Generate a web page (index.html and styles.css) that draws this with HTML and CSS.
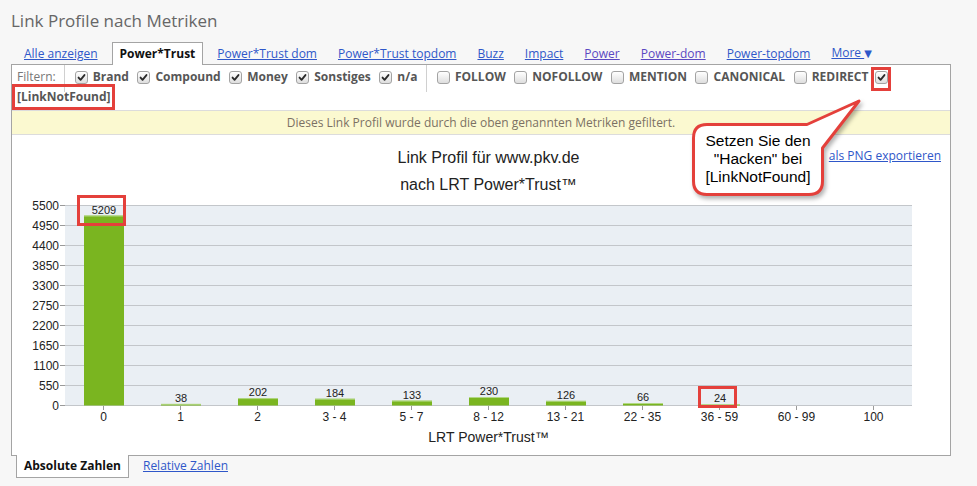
FILE: index.html
```html
<!DOCTYPE html>
<html lang="de">
<head>
<meta charset="utf-8">
<title>Link Profile nach Metriken</title>
<link rel="stylesheet" href="styles.css">
</head>
<body>
<div class="page">
  <h1 class="title">Link Profile nach Metriken</h1>
  <nav class="tabs">
    <a class="tab" href="#">Alle anzeigen</a>
    <span class="tab active">Power*Trust</span>
    <a class="tab" href="#">Power*Trust dom</a>
    <a class="tab" href="#">Power*Trust topdom</a>
    <a class="tab" href="#">Buzz</a>
    <a class="tab" href="#">Impact</a>
    <a class="tab visited" href="#">Power</a>
    <a class="tab visited" href="#">Power-dom</a>
    <a class="tab" href="#">Power-topdom</a>
    <a class="tab" href="#">More <span class="caret">&#9660;</span></a>
  </nav>
  <div class="panel">
    <div class="filters">
      <span class="flabel">Filtern:</span>
      <span class="sep"></span>
      <span class="cb checked"><svg viewBox="0 0 13 13"><path d="M3 6.6 L5.4 9.2 L10 3.6"/></svg></span><span class="opt">Brand</span>
      <span class="cb checked"><svg viewBox="0 0 13 13"><path d="M3 6.6 L5.4 9.2 L10 3.6"/></svg></span><span class="opt">Compound</span>
      <span class="cb checked"><svg viewBox="0 0 13 13"><path d="M3 6.6 L5.4 9.2 L10 3.6"/></svg></span><span class="opt">Money</span>
      <span class="cb checked"><svg viewBox="0 0 13 13"><path d="M3 6.6 L5.4 9.2 L10 3.6"/></svg></span><span class="opt">Sonstiges</span>
      <span class="cb checked"><svg viewBox="0 0 13 13"><path d="M3 6.6 L5.4 9.2 L10 3.6"/></svg></span><span class="opt">n/a</span>
      <span class="sep"></span>
      <span class="cb"></span><span class="opt">FOLLOW</span>
      <span class="cb"></span><span class="opt">NOFOLLOW</span>
      <span class="cb"></span><span class="opt">MENTION</span>
      <span class="cb"></span><span class="opt">CANONICAL</span>
      <span class="cb"></span><span class="opt last">REDIRECT</span>
      <span class="hl hl-cb"><span class="cb checked"><svg viewBox="0 0 13 13"><path d="M3 6.6 L5.4 9.2 L10 3.6"/></svg></span></span>
      <span class="break"></span>
      <span class="hl hl-text"><span class="opt">[LinkNotFound]</span></span>
    </div>
    <div class="notice">Dieses Link Profil wurde durch die oben genannten Metriken gefiltert.</div>
    <div class="chart">
      <a class="export" href="#">als PNG exportieren</a>
      <svg class="plot" width="938" height="320" viewBox="12 136 938 320">
        <text class="ctitle" x="488.5" y="164" text-anchor="middle">Link Profil für www.pkv.de</text>
        <text class="ctitle" x="488.5" y="191" text-anchor="middle">nach LRT Power*Trust™</text>
        <rect x="65" y="206" width="847" height="200" fill="#eaeff4"/>
        <g class="grid">
          <line x1="65" x2="912" y1="206.5" y2="206.5"/>
          <line x1="65" x2="912" y1="226.5" y2="226.5"/>
          <line x1="65" x2="912" y1="246.5" y2="246.5"/>
          <line x1="65" x2="912" y1="266.5" y2="266.5"/>
          <line x1="65" x2="912" y1="286.5" y2="286.5"/>
          <line x1="65" x2="912" y1="306.5" y2="306.5"/>
          <line x1="65" x2="912" y1="326.5" y2="326.5"/>
          <line x1="65" x2="912" y1="346.5" y2="346.5"/>
          <line x1="65" x2="912" y1="366.5" y2="366.5"/>
          <line x1="65" x2="912" y1="386.5" y2="386.5"/>
          <line x1="65" x2="912" y1="406.5" y2="406.5"/>
        </g>
        <g class="ticks">
          <line x1="60" x2="65" y1="206.5" y2="206.5"/>
          <line x1="60" x2="65" y1="226.5" y2="226.5"/>
          <line x1="60" x2="65" y1="246.5" y2="246.5"/>
          <line x1="60" x2="65" y1="266.5" y2="266.5"/>
          <line x1="60" x2="65" y1="286.5" y2="286.5"/>
          <line x1="60" x2="65" y1="306.5" y2="306.5"/>
          <line x1="60" x2="65" y1="326.5" y2="326.5"/>
          <line x1="60" x2="65" y1="346.5" y2="346.5"/>
          <line x1="60" x2="65" y1="366.5" y2="366.5"/>
          <line x1="60" x2="65" y1="386.5" y2="386.5"/>
          <line x1="60" x2="65" y1="406.5" y2="406.5"/>
          <line x1="103.5" x2="103.5" y1="407" y2="411"/>
          <line x1="180.5" x2="180.5" y1="407" y2="411"/>
          <line x1="257.5" x2="257.5" y1="407" y2="411"/>
          <line x1="334.5" x2="334.5" y1="407" y2="411"/>
          <line x1="411.5" x2="411.5" y1="407" y2="411"/>
          <line x1="488.5" x2="488.5" y1="407" y2="411"/>
          <line x1="565.5" x2="565.5" y1="407" y2="411"/>
          <line x1="642.5" x2="642.5" y1="407" y2="411"/>
          <line x1="719.5" x2="719.5" y1="407" y2="411"/>
          <line x1="796.5" x2="796.5" y1="407" y2="411"/>
          <line x1="873.5" x2="873.5" y1="407" y2="411"/>
        </g>
        <g class="ylab" text-anchor="end">
          <text x="59" y="210.5">5500</text>
          <text x="59" y="230.5">4950</text>
          <text x="59" y="250.5">4400</text>
          <text x="59" y="270.5">3850</text>
          <text x="59" y="290.5">3300</text>
          <text x="59" y="310.5">2750</text>
          <text x="59" y="330.5">2200</text>
          <text x="59" y="350.5">1650</text>
          <text x="59" y="370.5">1100</text>
          <text x="59" y="390.5">550</text>
          <text x="59" y="410.5">0</text>
        </g>
        <g class="bars">
          <rect x="84" y="216.6" width="40" height="189.9"/>
          <rect x="161" y="405.1" width="40" height="1.4"/>
          <rect x="238" y="399.2" width="40" height="7.3"/>
          <rect x="315" y="399.8" width="40" height="6.7"/>
          <rect x="392" y="401.7" width="40" height="4.8"/>
          <rect x="469" y="398.1" width="40" height="8.4"/>
          <rect x="546" y="401.9" width="40" height="4.6"/>
          <rect x="623" y="404.1" width="40" height="2.4"/>
          <rect x="700" y="405.6" width="40" height="0.9"/>
        </g>
        <g class="bartop">
          <line x1="84" x2="124" y1="217" y2="217"/>
          <line x1="161" x2="201" y1="405.3" y2="405.3"/>
          <line x1="238" x2="278" y1="399.6" y2="399.6"/>
          <line x1="315" x2="355" y1="400.2" y2="400.2"/>
          <line x1="392" x2="432" y1="402.1" y2="402.1"/>
          <line x1="469" x2="509" y1="398.5" y2="398.5"/>
          <line x1="546" x2="586" y1="402.3" y2="402.3"/>
          <line x1="623" x2="663" y1="404.5" y2="404.5"/>
          <line x1="700" x2="740" y1="405.8" y2="405.8"/>
        </g>
        <g class="vlab" text-anchor="middle">
          <text x="104" y="215">5209</text>
          <text x="181" y="403">38</text>
          <text x="258" y="397">202</text>
          <text x="335" y="397.5">184</text>
          <text x="412" y="399.5">133</text>
          <text x="489" y="396">230</text>
          <text x="566" y="399.5">126</text>
          <text x="643" y="402">66</text>
          <text x="720" y="403">24</text>
        </g>
        <g class="xlab" text-anchor="middle">
          <text x="103.5" y="422">0</text>
          <text x="180.5" y="422">1</text>
          <text x="257.5" y="422">2</text>
          <text x="334.5" y="422">3 - 4</text>
          <text x="411.5" y="422">5 - 7</text>
          <text x="488.5" y="422">8 - 12</text>
          <text x="565.5" y="422">13 - 21</text>
          <text x="642.5" y="422">22 - 35</text>
          <text x="719.5" y="422">36 - 59</text>
          <text x="796.5" y="422">60 - 99</text>
          <text x="873.5" y="422">100</text>
        </g>
        <text class="atitle" x="488.5" y="443" text-anchor="middle">LRT Power*Trust™</text>
        <g class="redbox">
          <rect x="78.5" y="197.5" width="46" height="28"/>
          <rect x="699.5" y="388.5" width="36" height="19"/>
        </g>
      </svg>
    </div>
  </div>
  <nav class="subtabs">
    <span class="tab active">Absolute Zahlen</span>
    <a class="tab" href="#">Relative Zahlen</a>
  </nav>
  <div class="callout">
    <svg class="bubble" width="185" height="110" viewBox="685 84 185 110">
      <path d="M707 113.5 L807 113.5 L859 90 L822.5 137 L822.5 170 Q822.5 183.5 809 183.5 L707 183.5 Q693.5 183.5 693.5 170 L693.5 127 Q693.5 113.5 707 113.5 Z"/>
    </svg>
    <div class="bubble-text">Setzen Sie den<br>"Hacken" bei<br>[LinkNotFound]</div>
  </div>
</div>
</body>
</html>
```

FILE: styles.css
```css
* { box-sizing: border-box; }
html, body {
  margin: 0;
  padding: 0;
  background: #f7f7f7;
}
body {
  font-family: "Open Sans", "DejaVu Sans", sans-serif;
  font-size: 12px;
  color: #333;
  width: 977px;
  height: 486px;
  overflow: hidden;
}
.page {
  position: relative;
  padding-left: 11px;
  width: 977px;
  height: 486px;
}
.title {
  margin: 11px 0 0 0;
  font-size: 17px;
  line-height: 20px;
  font-weight: normal;
  color: #666;
}
.tabs {
  display: flex;
  align-items: flex-end;
  gap: 7px;
  margin-top: 11px;
  padding-left: 6px;
  height: 22px;
  width: 940px;
}
.tab {
  display: block;
  padding: 0 7px;
  line-height: 21px;
  color: #2f57c9;
  text-decoration: underline;
  white-space: nowrap;
}
.tab.visited { color: #5b48c2; }
.tab .caret { font-size: 10px; text-decoration: none; display: inline-block; }
.tabs .tab.active {
  color: #111;
  font-weight: bold;
  text-decoration: none;
  background: #fff;
  border: 1px solid #a4a4a4;
  border-bottom: none;
  height: 23px;
  margin-bottom: -1px;
  position: relative;
  z-index: 2;
  padding: 0 7px;
}
.panel {
  width: 940px;
  background: #fff;
  border: 1px solid #a4a4a4;
}
.filters {
  display: flex;
  flex-wrap: wrap;
  align-items: flex-start;
  padding: 2px 5px 3px 5px;
  line-height: 20px;
}
.flabel {
  color: #777;
  padding-right: 8px;
}
.sep {
  width: 1px;
  height: 27px;
  background: #d0d0d0;
  margin: -2px 10px -5px 0;
}
.cb {
  display: block;
  width: 13px;
  height: 13px;
  margin-top: 4px;
  margin-right: 5px;
  border: 1px solid #a3a3a3;
  border-radius: 3px;
  background: linear-gradient(#ffffff, #dedede);
}
.cb svg {
  display: block;
  width: 11px;
  height: 11px;
}
.cb svg path {
  fill: none;
  stroke: #2a2a2a;
  stroke-width: 2.2;
  stroke-linecap: round;
  stroke-linejoin: round;
}
.opt {
  font-weight: bold;
  color: #565656;
  margin-right: 8.5px;
  white-space: nowrap;
}
.break {
  flex-basis: 100%;
  height: 0;
}
.hl {
  display: block;
  border: 3px solid #e4403b;
}
.hl-cb {
  padding: 1px 0 4px 1px;
  margin: 0 0 -4px -6px;
}
.hl-cb .cb { margin: 0; }
.hl-text {
  padding: 0 1px 0 2px;
  margin: -3px -4px -3px -5px;
}
.hl-text .opt { margin-right: 0; display: block; }
.notice {
  background: #fbf9d0;
  border-top: 1px solid #dcdcdc;
  border-bottom: 1px solid #dcdcdc;
  height: 25px;
  line-height: 23px;
  text-align: center;
  color: #7b7164;
}
.chart {
  position: relative;
  height: 320px;
}
.export {
  position: absolute;
  top: 13px;
  right: 9px;
  line-height: 16px;
  color: #2f57c9;
  text-decoration: underline;
}
.plot {
  display: block;
  font-family: "Liberation Sans", Arial, sans-serif;
}
.ctitle {
  font-size: 16px;
  fill: #222;
}
.atitle {
  font-size: 14px;
  fill: #222;
}
.grid line {
  stroke: #c3c6ca;
  stroke-width: 1;
}
.ticks line {
  stroke: #9a9a9a;
  stroke-width: 1;
}
.ylab text, .xlab text {
  font-size: 12px;
  fill: #222;
}
.vlab text {
  font-size: 11px;
  fill: #222;
}
.bars rect { fill: #7ab520; }
.bartop line {
  stroke: #b2d884;
  stroke-width: 1;
}
.redbox rect {
  fill: none;
  stroke: #e4403b;
  stroke-width: 3;
}
.subtabs {
  display: flex;
  gap: 7px;
  padding-left: 5px;
}
.subtabs .tab.active {
  color: #111;
  font-weight: bold;
  text-decoration: none;
  background: #fff;
  border: 1px solid #a4a4a4;
  border-top: none;
  margin-top: -1px;
  height: 23px;
  line-height: 21px;
}
.subtabs .tab { line-height: 20px; }
.callout {
  position: absolute;
  left: 685px;
  top: 84px;
  width: 185px;
  height: 110px;
  z-index: 5;
}
.bubble {
  display: block;
  overflow: visible;
}
.bubble path {
  fill: #fff;
  stroke: #e4403b;
  stroke-width: 3;
  stroke-linejoin: round;
  filter: drop-shadow(2px 3px 2px rgba(0, 0, 0, 0.3));
}
.bubble-text {
  position: absolute;
  left: 8px;
  top: 28px;
  width: 130px;
  height: 72px;
  display: flex;
  align-items: center;
  justify-content: center;
  text-align: center;
  font-family: "Liberation Sans", Arial, sans-serif;
  font-size: 15.5px;
  line-height: 18px;
  color: #000;
}
```
